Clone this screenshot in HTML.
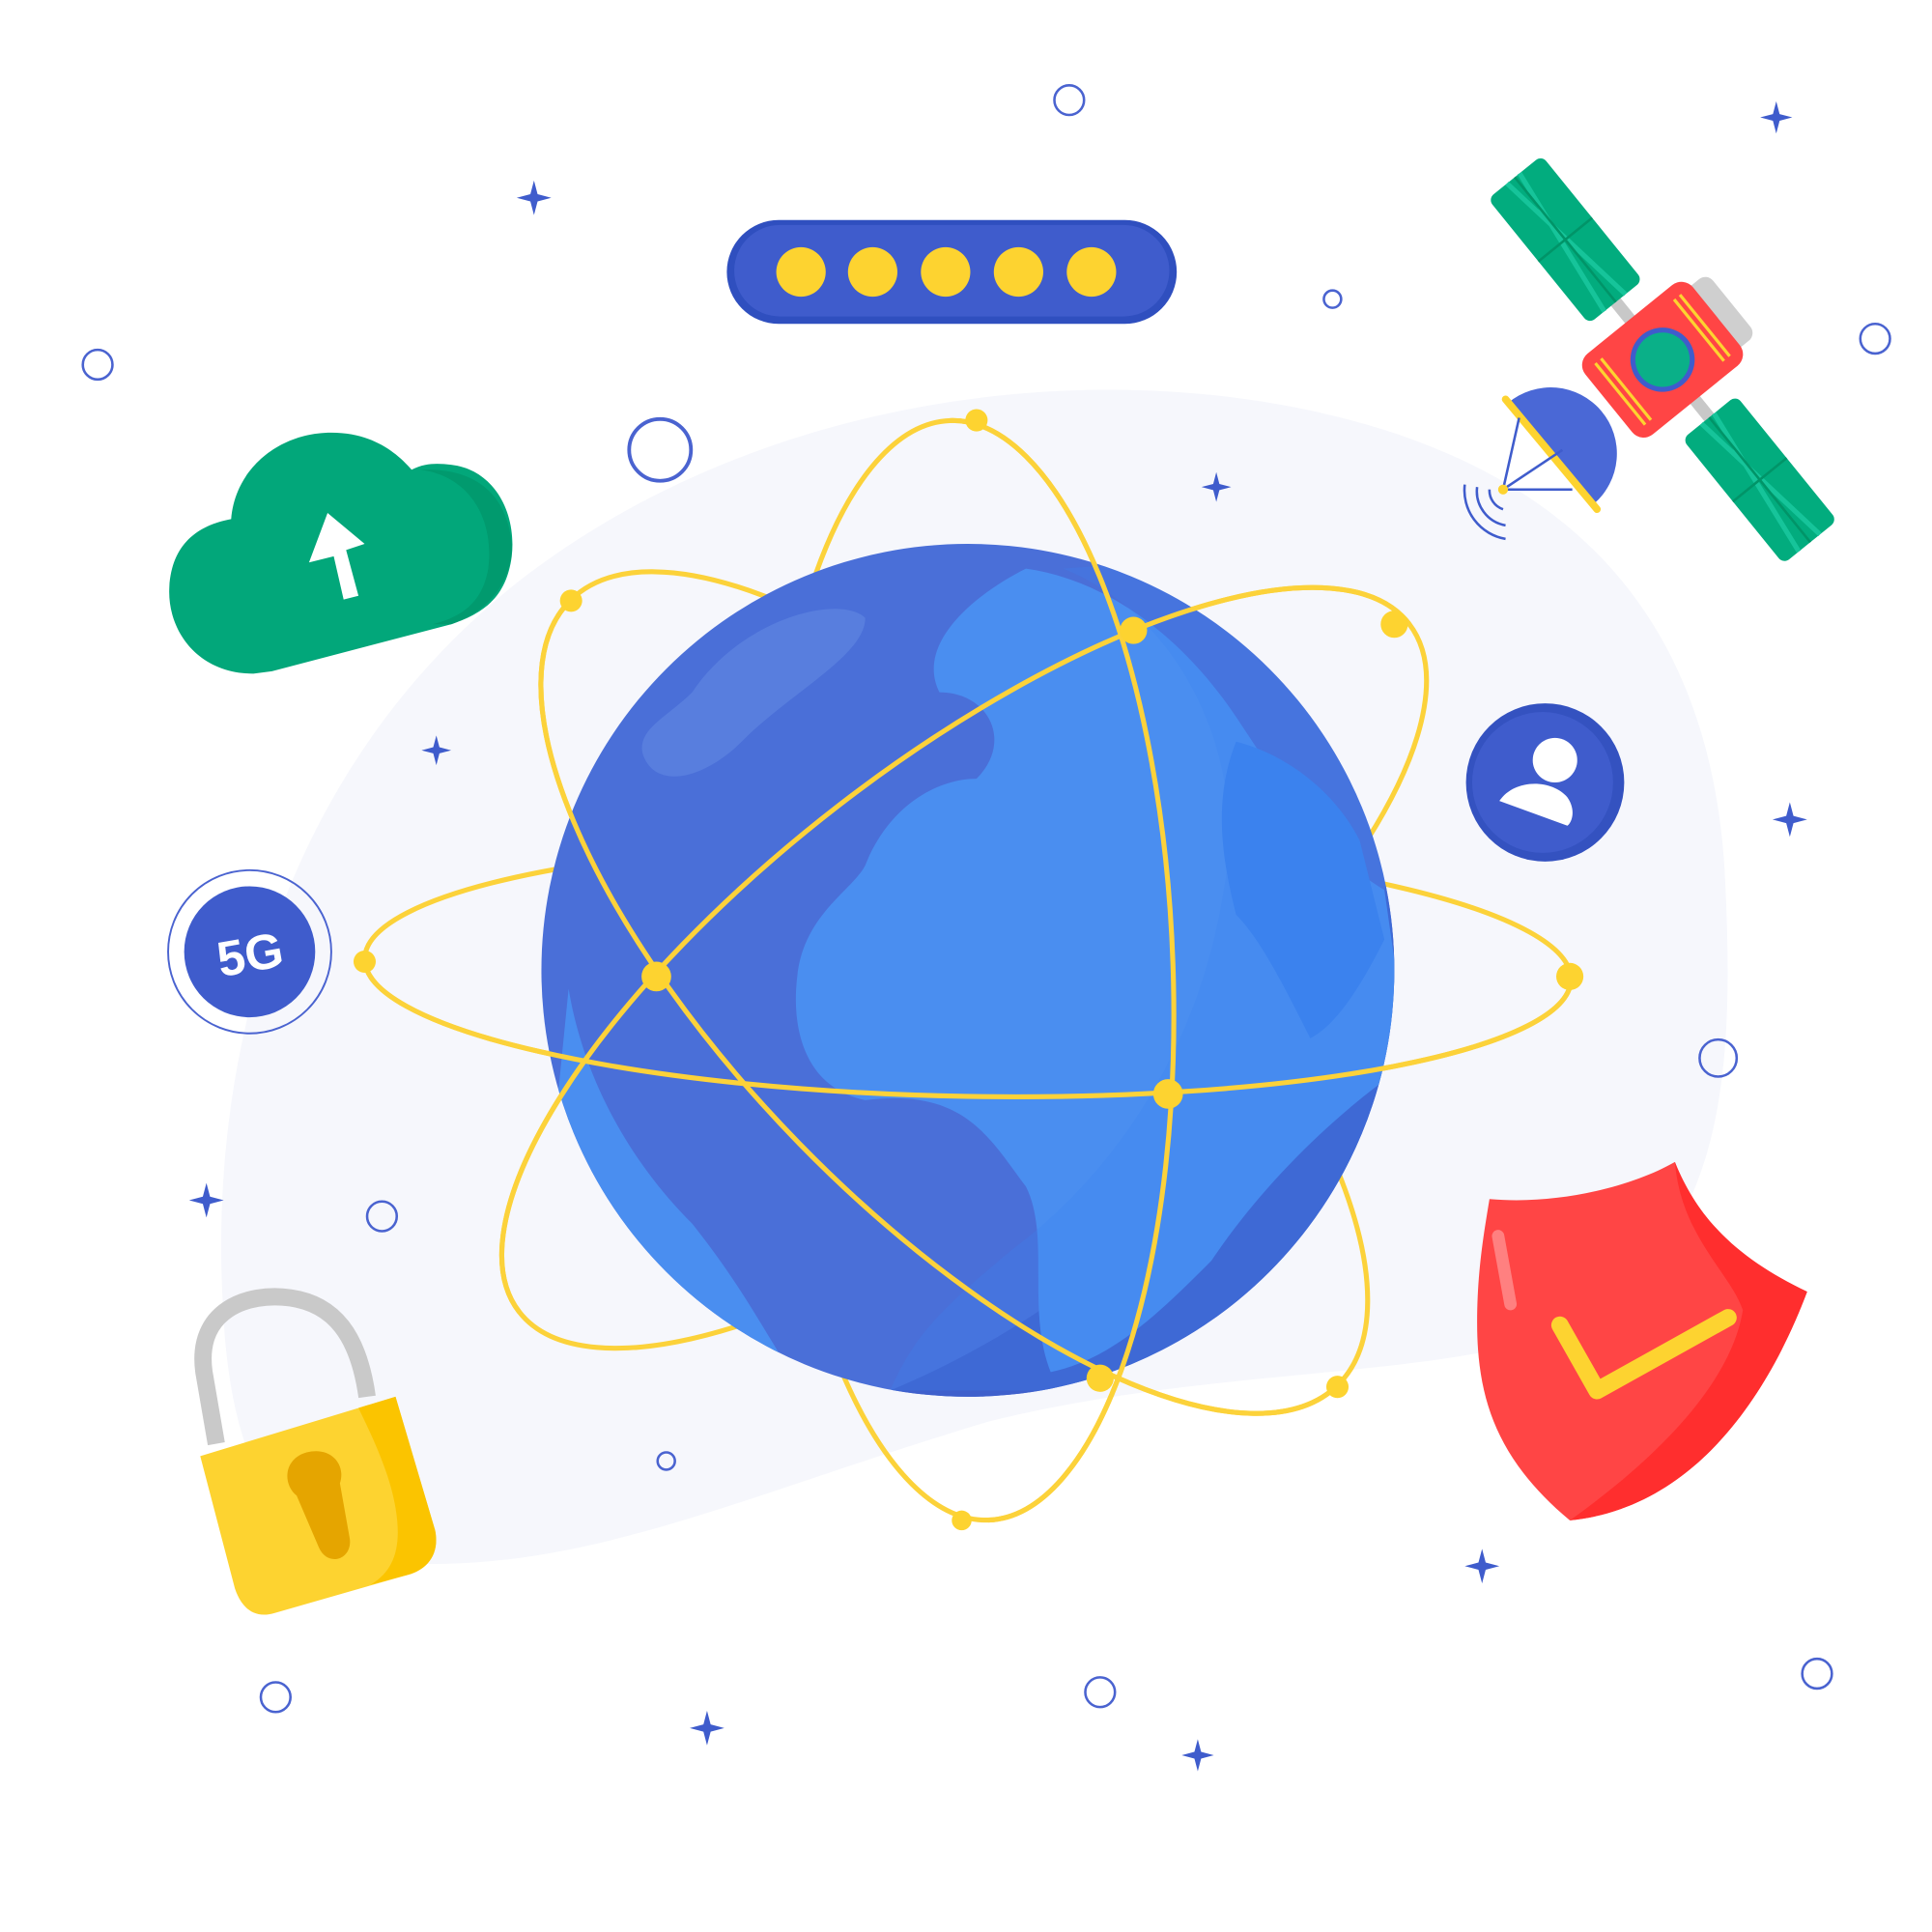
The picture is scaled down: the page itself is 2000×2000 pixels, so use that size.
<!DOCTYPE html>
<html><head><meta charset="utf-8"><style>html,body{margin:0;padding:0;background:#fff}svg{display:block}</style></head>
<body>
<svg width="2000" height="2000" viewBox="0 0 1563 1563" xmlns="http://www.w3.org/2000/svg">
<defs>
<symbol id="st" viewBox="-12 -12 24 24"><path d="M0-12 L2.5-2.5 12 0 2.5 2.5 0 12-2.5 2.5-12 0-2.5-2.5Z" fill="#3f5ccc"/></symbol>
<clipPath id="globeclip"><circle cx="783" cy="785" r="345"/></clipPath>
</defs>
<rect width="1563" height="1563" fill="#fff"/>
<path d="M180 1050 C170 850 230 620 420 470 C600 330 850 290 1050 330 C1250 370 1380 480 1395 700 C1405 880 1390 980 1300 1060 C1200 1120 1000 1100 800 1150 C600 1210 480 1270 330 1265 C220 1262 185 1180 180 1050Z" fill="#f6f7fc"/>
<g fill="none" stroke="#4a63d0" stroke-width="2">
<circle cx="865" cy="81" r="12"/><circle cx="79" cy="295" r="12"/><circle cx="1078" cy="242" r="7"/><circle cx="1517" cy="274" r="12"/><circle cx="534" cy="364" r="25" stroke-width="3"/><circle cx="1390" cy="856" r="15"/><circle cx="309" cy="984" r="12"/><circle cx="539" cy="1182" r="7"/><circle cx="223" cy="1373" r="12"/><circle cx="890" cy="1369" r="12"/><circle cx="1470" cy="1354" r="12"/>
</g>
<g>
<use href="#st" x="418" y="146" width="28" height="28"/><use href="#st" x="1424" y="82" width="26" height="26"/><use href="#st" x="972" y="382" width="24" height="24"/><use href="#st" x="341" y="595" width="24" height="24"/><use href="#st" x="1434" y="649" width="28" height="28"/><use href="#st" x="153" y="957" width="28" height="28"/><use href="#st" x="1185" y="1253" width="28" height="28"/><use href="#st" x="558" y="1384" width="28" height="28"/><use href="#st" x="956" y="1407" width="26" height="26"/>
</g>
<g fill="none" stroke="#fcd23a" stroke-width="4">
<ellipse cx="783" cy="784" rx="488" ry="103" transform="rotate(1 783 784)"/>
<ellipse cx="772" cy="803" rx="444" ry="175" transform="rotate(45.7 772 803)"/>
<ellipse cx="780" cy="783" rx="455" ry="166" transform="rotate(-37.7 780 783)"/>
<ellipse cx="784" cy="785" rx="165" ry="445" transform="rotate(-2 784 785)"/>
</g>
<circle cx="783" cy="785" r="345" fill="#4a6fd8"/>
<g clip-path="url(#globeclip)">
<path d="M1128 785 A345 345 0 0 1 720 1125 C900 1050 1050 900 1128 700Z" fill="#3f60cc"/>
<path d="M830 460 C900 470 960 520 1000 580 C1040 640 1070 690 1120 720 L1140 860 C1080 900 1020 960 980 1020 C940 1060 900 1100 850 1110 C830 1060 850 1000 830 960 C800 920 780 880 700 890 C650 880 640 830 645 790 C650 740 690 720 700 700 C720 650 760 630 790 630 C820 600 800 560 760 560 C740 520 790 480 830 460Z" fill="#4a8ef0"/>
<path d="M1000 600 C1040 610 1080 640 1100 680 L1120 760 C1100 800 1080 830 1060 840 C1040 800 1020 760 1000 740 C990 700 980 650 1000 600Z" fill="#3b82ee"/>
<path d="M460 800 C470 860 500 930 560 990 C600 1040 620 1080 640 1110 C560 1080 480 1000 450 900Z" fill="#4a8ef0"/>
<path d="M560 560 C600 500 680 480 700 500 C700 530 640 560 600 600 C570 630 530 640 520 610 C515 590 540 580 560 560Z" fill="#5b82e0" opacity="0.8"/>
<path d="M860 460 C960 500 1010 620 990 720 C970 850 900 950 820 1010 C760 1060 740 1080 720 1125 L1128 1125 L1128 440Z" fill="#3b82ee" opacity="0.25"/>
</g>
<defs>
<clipPath id="cA" clipPathUnits="userSpaceOnUse"><rect x="-600" y="0" width="1200" height="300"/></clipPath>
<clipPath id="cB" clipPathUnits="userSpaceOnUse"><rect x="-600" y="0" width="1200" height="300"/></clipPath>
<clipPath id="cC" clipPathUnits="userSpaceOnUse"><rect x="-600" y="-300" width="1200" height="300"/></clipPath>
<clipPath id="cD" clipPathUnits="userSpaceOnUse"><rect x="0" y="-600" width="300" height="1200"/></clipPath>
</defs>
<g fill="none" stroke="#fcd23a" stroke-width="4">
<g transform="translate(783 784) rotate(1)"><ellipse rx="488" ry="103" clip-path="url(#cA)"/></g>
<g transform="translate(772 803) rotate(45.7)"><ellipse rx="444" ry="175" clip-path="url(#cB)"/></g>
<g transform="translate(780 783) rotate(-37.7)"><ellipse rx="455" ry="166" clip-path="url(#cC)"/></g>
<g transform="translate(784 785) rotate(-2)"><ellipse rx="165" ry="445" clip-path="url(#cD)"/></g>
</g>
<g fill="#fdd330">
<circle cx="462" cy="486" r="9"/><circle cx="790" cy="340" r="9"/><circle cx="1128" cy="505" r="11"/><circle cx="917" cy="510" r="11"/><circle cx="531" cy="790" r="12"/><circle cx="295" cy="778" r="9"/><circle cx="1270" cy="790" r="11"/><circle cx="945" cy="885" r="12"/><circle cx="890" cy="1115" r="11"/><circle cx="1082" cy="1122" r="9"/><circle cx="778" cy="1230" r="8"/>
</g>
<rect x="588" y="178" width="364" height="84" rx="42" fill="#2f4fbf"/>
<rect x="594" y="182" width="352" height="74" rx="37" fill="#3f5ccc"/>
<g fill="#fdd330"><circle cx="648" cy="220" r="20"/><circle cx="706" cy="220" r="20"/><circle cx="765" cy="220" r="20"/><circle cx="824" cy="220" r="20"/><circle cx="883" cy="220" r="20"/></g>
<path d="M205 545 C160 545 135 510 137 475 C139 440 160 425 187 420 C190 380 225 350 268 350 C300 350 320 365 333 380 C345 374 355 375 365 376 C400 380 418 415 414 450 C410 480 395 495 365 505 L220 543Z" fill="#02a77a"/>
<path d="M340 380 C380 385 400 420 395 460 C390 490 370 500 350 505 L365 505 C395 495 415 470 414 440 C410 400 385 378 340 380Z" fill="#019a6e"/>
<path d="M250 455 L270 450 L278 485 L290 482 L280 445 L295 440 L265 415Z" fill="#fff"/>
<circle cx="202" cy="770" r="66" fill="none" stroke="#4a63d0" stroke-width="1.5"/>
<circle cx="202" cy="770" r="53" fill="#3f5ccc"/>
<text x="202" y="786" font-family="Liberation Sans, sans-serif" font-weight="bold" font-size="40" fill="#fff" text-anchor="middle" transform="rotate(-10 202 770)">5G</text>
<circle cx="1250" cy="633" r="64" fill="#3452c0"/>
<circle cx="1248" cy="633" r="57" fill="#3f5ccc"/>
<circle cx="1258" cy="615" r="18" fill="#fff"/>
<path d="M1213 648 C1225 630 1255 630 1268 645 C1275 655 1272 665 1268 668Z" fill="#fff"/>
<path d="M175 1168 L165 1110 C158 1060 200 1045 235 1050 C270 1055 290 1080 297 1130" fill="none" stroke="#c9c9c9" stroke-width="14"/>
<path d="M162 1178 L320 1130 L352 1238 C356 1258 345 1270 330 1274 L222 1305 C205 1310 195 1300 190 1285Z" fill="#fdd330"/>
<path d="M290 1139 L320 1130 L352 1238 C356 1258 345 1270 330 1274 L300 1282 C320 1270 325 1250 320 1220 C315 1190 300 1160 290 1139Z" fill="#fbc400"/>
<path d="M240 1210 C228 1200 230 1180 248 1175 C268 1170 280 1185 275 1200 L283 1245 C285 1262 265 1268 258 1252Z" fill="#e5a500"/>
<path d="M1205 970 C1260 975 1320 960 1355 940 C1375 990 1410 1020 1462 1045 C1430 1130 1370 1220 1270 1230 C1210 1180 1195 1130 1195 1070 C1195 1030 1200 1000 1205 970Z" fill="#ff4545"/>
<path d="M1355 940 C1375 990 1410 1020 1462 1045 C1430 1130 1370 1220 1270 1230 C1340 1180 1400 1120 1410 1060 C1400 1030 1360 1000 1355 940Z" fill="#ff2e2e"/>
<path d="M1212 1000 L1222 1055" stroke="#ff8080" stroke-width="10" stroke-linecap="round"/>
<path d="M1262 1072 L1292 1125 L1398 1066" fill="none" stroke="#fdd330" stroke-width="14" stroke-linecap="round" stroke-linejoin="round"/>
<!-- satellite -->
<g transform="translate(1345 291) rotate(51)">
<rect x="-70" y="-5" width="140" height="10" fill="#c8c8c8"/>
<rect x="-190" y="-28" width="130" height="56" rx="6" fill="#02ac7e"/>
<rect x="60" y="-28" width="130" height="56" rx="6" fill="#02ac7e"/>
<path d="M-190 -5 L-60 12 M-190 8 L-60 -10 M60 -5 L190 12 M60 8 L190 -10" stroke="#16c49a" stroke-width="4"/>
<path d="M-125 -28 V28 M125 -28 V28 M-190 0 H-60 M60 0 H190" stroke="#019468" stroke-width="2"/>
<rect x="-32" y="-72" width="64" height="40" rx="8" fill="#cfcfcf"/>
<rect x="-42" y="-56" width="84" height="112" rx="12" fill="#ff4545"/>
<path d="M-32 -44 H32 M-32 -38 H32 M-32 44 H32 M-32 38 H32" stroke="#fdd330" stroke-width="2.5"/>
<circle cx="0" cy="0" r="26" fill="#3f5ccc"/>
<circle cx="0" cy="0" r="22" fill="#0ab088"/>
</g>
<path d="M1220 326 A53 53 0 0 1 1289 408Z" fill="#4a68d6"/>
<path d="M1218 323 L1292 412" stroke="#fdd330" stroke-width="6" stroke-linecap="round"/>
<path d="M1229 338 L1216 396 L1264 364 M1216 396 L1272 396" fill="none" stroke="#3f5ccc" stroke-width="2"/>
<circle cx="1216" cy="396" r="4" fill="#fdd330"/>
<path d="M1216 412 A16 16 0 0 1 1205 396 M1218 425 A28 28 0 0 1 1195 394 M1218 436 A40 40 0 0 1 1185 392" fill="none" stroke="#3f5ccc" stroke-width="2"/>
</svg>
</body></html>
